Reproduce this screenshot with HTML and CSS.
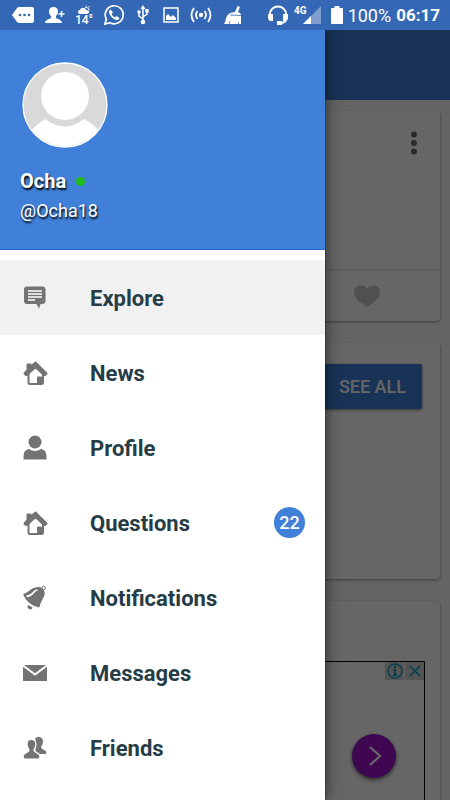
FILE: index.html
```html
<!DOCTYPE html>
<html lang="en">
<head>
<meta charset="utf-8">
<meta name="viewport" content="width=device-width, initial-scale=1">
<title>Explore</title>
<link rel="stylesheet" href="styles.css">
</head>
<body>
<svg class="defs" aria-hidden="true">
  <symbol id="house" viewBox="0 0 26 26">
    <path d="M6.500 12v10.500q0 1.500 1.500 1.500h11.500q1.500 0 1.500-1.500V12l-7.500-7z" fill="#fff" stroke="currentColor" stroke-width="2" stroke-linejoin="round"/>
    <path d="M15 24v-6.500q0-1 1-1h3q1 0 1 1V24z" fill="currentColor"/>
    <path d="M2.500 13.500 5.500 10V4.500h3V7l5-4.500L24.500 13.500l-1.500 1.500-1.500-.5-8-7.500-8 7.500-1.500.5z" fill="currentColor" stroke="currentColor" stroke-width="2" stroke-linejoin="round"/>
  </symbol>
</svg>

<header class="status">
  <div class="status-icons">
    <svg width="22" height="18" viewBox="0 0 22 18"><path d="M7 1h13q2 0 2 2v12q0 2-2 2H7q-1 0-2-1L0 9l5-7q1-1 2-1z" fill="#fff"/><g fill="#3468b4"><circle cx="8" cy="9" r="1.300"/><circle cx="12.500" cy="9" r="1.300"/><circle cx="17" cy="9" r="1.300"/></g></svg>
    <svg width="20" height="18" viewBox="0 0 20 18"><path d="M8.500 1c3 0 4.500 2 4.500 4.500S12 9 11 10v2c1 1 6 1.500 6 5H0c0-3.500 5-4 6-5v-2C5 9 4 8 4 5.500S5.500 1 8.500 1z" fill="#fff"/><path d="M13.500 8h6M16.500 5v6" stroke="#fff" stroke-width="1.500"/></svg>
    <span class="weather"><svg width="14" height="9" viewBox="0 0 14 9"><path d="M3 9a2 2 0 0 1 0-4q1-3 4-2 2 0 2 2 3 0 3 2t-2 2z" fill="#fff"/><path d="M8 2.500a3 3 0 0 1 4 3M9 .5v1M12.500 1l-1 1.500" stroke="#fff" fill="none"/></svg><b>14°</b></span>
    <svg width="22" height="22" viewBox="0 0 22 22"><path d="m2 20 1.300-5A9 9 0 1 1 7 18.700z" fill="none" stroke="#fff" stroke-width="1.700"/><path d="M7.500 5.500 6 7c-.5 4 5 9.500 9 9l1.500-2-3-2-1.500 1.500Q9.500 12.500 8.500 10L10 8.500z" fill="#fff"/></svg>
    <svg width="14" height="20" viewBox="-1 0 14 20"><path d="M6 3v13M6 14l-4-3V7M6 12l4-3V6" fill="none" stroke="#fff" stroke-width="1.500"/><path d="M3.500 4 6 0l2.500 4zM8.300 4h3.400v3.500H8.300z" fill="#fff"/><circle cx="2" cy="7" r="1.800" fill="#fff"/><circle cx="6" cy="17" r="2.300" fill="#fff"/></svg>
    <svg width="18" height="16" viewBox="-2 0 18 16"><path d="M1 1h14v14H1z" fill="none" stroke="#fff" stroke-width="1.500"/><path d="M3 13V9l2-2 3 3 2-2 3 3v2z" fill="#fff"/></svg>
    <svg width="22" height="18" viewBox="0 0 22 18"><circle cx="11" cy="9" r="2.200" fill="#fff"/><path d="M7.500 5q-3 4 0 8M14.500 5q3 4 0 8M4 2q-5 7 0 14M18 2q5 7 0 14" stroke="#fff" stroke-width="1.800" fill="none"/></svg>
    <svg width="20" height="20" viewBox="0 0 20 20"><path d="m14.500 1 2.500 1-2 5q3 1 3 3v9h-2v-3l-1 3H1q2-3 2-6 2-6 9-6z" fill="#fff"/><path d="m7 10 11 .5M7 16l-1 3" stroke="#3468b4" stroke-width=".8"/></svg>
  </div>
  <div class="status-system">
    <svg width="22" height="20" viewBox="0 0 22 20"><path d="M3 11V9a8 7.500 0 0 1 16 0v5q0 4-6 4" fill="none" stroke="#fff" stroke-width="2"/><path d="M1 9h5v7H3q-2-1-2-4zM16 9h5v4q0 2-2 3h-3zM10 16h5v4h-5z" fill="#fff"/></svg>
    <span class="signal"><b>4G</b><svg width="18" height="18" viewBox="0 0 18 18"><path d="M18 0v18H0z" fill="#809fd0"/><path d="M8 10v8H0z" fill="#fff"/></svg></span>
    <svg width="12" height="18" viewBox="0 0 12 18"><path d="M3.500 0h5v2H11q1 0 1 1v14q0 1-1 1H1q-1 0-1-1V3q0-1 1-1h2.500z" fill="#fff"/></svg>
    <span class="battery-level">100%</span>
    <time>06:17</time>
  </div>
</header>

<div class="stage">
  <main class="page">
    <div class="app-bar"></div>
    <section class="card post">
      <div class="post-body">
        <button class="icon-button" aria-label="More options"><svg width="8" height="24" viewBox="0 0 8 24" fill="#666"><circle cx="4" cy="3.500" r="3"/><circle cx="4" cy="12" r="3"/><circle cx="4" cy="20.500" r="3"/></svg></button>
      </div>
      <div class="post-actions">
        <button class="icon-button" aria-label="Like"><svg width="26" height="22" viewBox="0 0 26 22"><path d="M13 22C6 17 0 14 0 7c0-7 10-9 13-3 3-6 13-4 13 3 0 7-6 10-13 15z" fill="#c8c8c8"/></svg></button>
      </div>
    </section>
    <section class="card people"><button class="see-all">SEE ALL</button></section>
    <section class="card sponsored">
      <div class="ad">
        <div class="ad-choices">
          <button class="ad-button" aria-label="Ad information"><svg width="16" height="16" viewBox="0 0 16 16"><circle cx="8" cy="8" r="7" fill="none" stroke="#00a0c0" stroke-width="1.300"/><path d="M8 3v2M6.500 7H8v5M6 12h4" stroke="#00a0c0" stroke-width="2" fill="none"/></svg></button>
          <button class="ad-button" aria-label="Close ad"><svg width="16" height="16" viewBox="0 0 16 16"><path d="m3 3 10 10M13 3 3 13" stroke="#00a0c0" stroke-width="1.700"/></svg></button>
        </div>
        <button class="ad-next" aria-label="Next"><svg width="44" height="44" viewBox="0 0 44 44"><path d="m18 13 10 9-10 9" fill="none" stroke="#fff" stroke-width="2.200"/></svg></button>
      </div>
    </section>
  </main>
  <div class="scrim"></div>

  <aside class="drawer">
    <div class="account">
      <svg class="avatar" width="86" height="86" viewBox="0 0 86 86"><circle cx="43" cy="43" r="42" fill="#d9d9d9"/><path d="M10 68q6-7 13-11 20 15 39 0 8 4 14 11a42 42 0 0 1-66 0z" fill="#fff"/><circle cx="43" cy="34" r="24" fill="#fff"/><circle cx="43" cy="43" r="42" fill="none" stroke="#fff" stroke-width="1.300"/></svg>
      <div class="name">Ocha <span class="online"></span></div>
      <div class="handle">@Ocha18</div>
    </div>
    <nav class="menu">
      <a class="item current" href="#explore"><svg width="26" height="26" viewBox="0 0 26 26"><path d="M5 1.500h15q3.500 0 3.500 3V16q0 3-3.500 3h-1.500L17 23.500 14.500 19H5q-3 0-3-3V4.500q0-3 3-3z" fill="currentColor"/><path d="M6 6h14M6 9h14M6 12h14M6 15h7" stroke="#fff" stroke-width="1.300"/></svg><span>Explore</span></a>
      <a class="item" href="#news"><svg width="26" height="26"><use href="#house"/></svg><span>News</span></a>
      <a class="item" href="#profile"><svg width="26" height="26" viewBox="0 0 26 26" fill="currentColor"><circle cx="13" cy="7" r="6.500"/><path d="M1.500 24.500V21q0-6 5.500-7 6 4 12 0 5.500 1 5.500 7v3.500z"/></svg><span>Profile</span></a>
      <a class="item" href="#questions"><svg width="26" height="26"><use href="#house"/></svg><span>Questions</span><span class="count">22</span></a>
      <a class="item" href="#notifications"><svg width="26" height="26" viewBox="0 0 26 26"><path d="M1.200 9C7 7 8 4 12.500 2.700q5-1.700 8 .8 3.500 3.500 1.500 8c-2 4-3 5-4.500 10.500-1 1-2 0-3.500-.5C8 19.500 3 15 1.200 9z" fill="currentColor"/><path d="M4.500 11.500q5-1 7-4 1-2 4-2.500" fill="none" stroke="#fff" stroke-width="1.700"/><circle cx="21.700" cy="3" r="1.700" fill="#fff" stroke="currentColor"/><path d="m6.500 20 4 2.500-1 2q-4 0-4-3z" fill="currentColor"/></svg><span>Notifications</span></a>
      <a class="item" href="#messages"><svg width="26" height="26" viewBox="0 0 26 26"><path d="M1 5h24v16H1z" fill="currentColor"/><path d="m.5 5 12.500 9.500L25.500 5" fill="none" stroke="#fff" stroke-width="2"/></svg><span>Messages</span></a>
      <a class="item" href="#friends"><svg width="26" height="26" viewBox="0 0 26 26" fill="currentColor"><path d="M16.500 2c3 0 4.500 2 4.500 4.500 0 3-2 4-2 6 1 2.500 5.500 2 5.500 5.500q0 1-2 1h-9V3q1-1 3-1z"/><path d="M9 4.500c3.500 0 5 2.200 5 5 0 3-2 4-2 6 1 2.500 6 2 6 6q0 2.500-2 2.500H3q-2 0-2-2.500c0-4 5-3.500 6-6 0-2-2-3-2-6 0-2.800 1-5 4-5z" stroke="#fff" stroke-width="1.200"/></svg><span>Friends</span></a>
    </nav>
  </aside>
</div>
</body>
</html>
```
FILE: styles.css
```css
* { box-sizing: border-box; }

body {
  margin: 0;
  height: 100vh;
  display: flex;
  flex-direction: column;
  overflow: hidden;
  font-family: Roboto, sans-serif;
}

button {
  margin: 0;
  padding: 0;
  border: 0;
  background: none;
  font: inherit;
}

svg { display: block; flex-shrink: 0; }
.defs { position: absolute; width: 0; height: 0; }

.status {
  display: flex;
  justify-content: space-between;
  align-items: center;
  height: 30px;
  flex-shrink: 0;
  padding: 0 10px 0 12px;
  background: #3468b4;
  color: #fff;
}

.status-icons { display: flex; align-items: center; gap: 11px; }
.status-system { display: flex; align-items: center; gap: 5px; font-size: 18px; }
.status-system time { font-size: 17px; font-weight: 700; }

.weather {
  display: flex;
  flex-direction: column;
  align-items: center;
  width: 16px;
  font-size: 12px;
  line-height: 12px;
}
.weather b { font-weight: 500; }

.signal { display: flex; align-items: center; margin-right: 5px; }
.signal b { align-self: flex-start; margin-right: -4px; font-size: 10px; line-height: 10px; }

.stage { position: relative; flex: 1; min-height: 0; overflow: hidden; }

.page {
  display: flex;
  flex-direction: column;
  background: #fafafa;
}

.app-bar { height: 70px; background: #4080d8; }

.card {
  margin: 11px 10px;
  background: #fff;
  border-radius: 4px;
  box-shadow: 0 1px 3px rgba(0, 0, 0, 0.4);
}

.post-body {
  display: flex;
  justify-content: flex-end;
  align-items: flex-start;
  height: 160px;
  padding: 20px 22px;
  border-bottom: 2px solid #e8e8e8;
}
.post-actions {
  display: flex;
  justify-content: flex-end;
  align-items: center;
  height: 50px;
  padding: 0 60px;
}

.people {
  display: flex;
  justify-content: flex-end;
  align-items: flex-start;
  height: 236px;
  padding: 21px 18px;
}
.see-all {
  height: 45px;
  padding: 0 16px;
  border-radius: 2px;
  background: #4080d8;
  box-shadow: 0 1px 3px rgba(0, 0, 0, 0.5);
  color: #fff;
  font-size: 18px;
  font-weight: 500;
}

.sponsored { height: 300px; padding: 60px 15px 0; }
.ad {
  display: flex;
  flex-direction: column;
  align-items: flex-end;
  height: 240px;
  border: 1px solid #000;
}
.ad-choices { display: flex; gap: 1px; }
.ad-button {
  display: grid;
  place-items: center;
  width: 19px;
  height: 18px;
  background: #d2d2d2;
}
.ad-next {
  margin: 54px 28px 0;
  border-radius: 50%;
  background: #9d12c8;
  box-shadow: 0 2px 4px rgba(0, 0, 0, 0.6);
}

.scrim { position: absolute; inset: 0; background: rgba(0, 0, 0, 0.6); }

.drawer {
  position: absolute;
  top: 0;
  bottom: 0;
  left: 0;
  width: calc(100% - 125px);
  max-width: 400px;
  overflow: hidden;
  background: #fff;
  box-shadow: 0 0 14px rgba(0, 0, 0, 0.6), 0 0 1px #000;
}

.account {
  height: 220px;
  padding: 32px 20px 0;
  border-bottom: 1px solid #1a68cc;
  background: #4080d8;
  color: #fff;
  text-shadow: 1px 2px 2px #000;
}
.avatar { margin-left: 2px; }
.name {
  display: flex;
  align-items: center;
  gap: 10px;
  margin-top: 20px;
  font-size: 20px;
  font-weight: 700;
  line-height: 26px;
}
.online { width: 9px; height: 9px; border-radius: 50%; background: #1fbe1a; }
.handle { margin-top: 5px; font-size: 18px; line-height: 24px; }

.menu { padding-top: 10px; }
.item {
  display: flex;
  align-items: center;
  height: 75px;
  padding: 0 20px 0 22px;
  color: #737373;
  text-decoration: none;
}
.item span {
  margin-left: 42px;
  padding-top: 2px;
  color: #263d48;
  font-size: 22px;
  font-weight: 700;
  line-height: 30px;
}
.item.current { background: #f1f1f1; }
.item .count {
  width: 31px;
  height: 31px;
  margin-left: auto;
  padding: 0;
  border-radius: 50%;
  background: #4080d8;
  color: #fff;
  font-size: 18px;
  font-weight: 500;
  line-height: 32px;
  text-align: center;
}
```
